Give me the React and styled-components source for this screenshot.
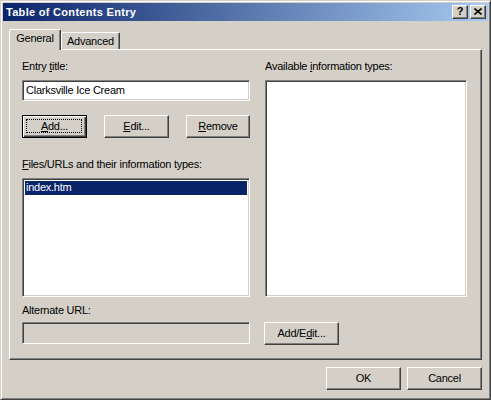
import styled, { createGlobalStyle } from 'styled-components'

/* ── GLOBAL ── */
const GlobalStyle = createGlobalStyle`
  html, body { margin: 0; padding: 0; background: #d4d0c8; }
  * { box-sizing: border-box; }
`

const FACE = '#d4d0c8'
const FONT = `'Liberation Sans', Arial, sans-serif`

/* ── WINDOW FRAME ── */
const Window = styled.div`
  width: 491px;
  height: 400px;
  background: ${FACE};
  border: 1px solid;
  border-color: ${FACE} #404040 #404040 ${FACE};
  box-shadow: inset 1px 1px #fff, inset -1px -1px #808080;
  padding: 2px;
  display: flex;
  flex-direction: column;
  font-family: ${FONT};
  font-size: 11px;
  letter-spacing: -0.25px;
  color: #000;
`

const TitleBar = styled.div`
  height: 18px;
  display: flex;
  align-items: center;
  padding: 0 2px 0 3px;
  background: linear-gradient(to right, #0a246a, #a6caf0);
`

const TitleText = styled.span`
  flex: 1;
  color: #fff;
  font-weight: bold;
  font-size: 11px;
  letter-spacing: 0.3px;
  line-height: 13px;
`

const CaptionBtn = styled.div`
  width: 16px;
  height: 14px;
  margin-left: ${({ $gap }) => $gap || 0}px;
  background: ${FACE};
  border: 1px solid;
  border-color: #fff #404040 #404040 #fff;
  box-shadow: inset -1px -1px #808080;
  display: flex;
  align-items: center;
  justify-content: center;
  font-weight: bold;
  font-size: 11px;
  line-height: 11px;
  padding-bottom: 1px;
`

/* ── BODY / TABS ── */
const Body = styled.div`
  flex: 1;
  display: flex;
  flex-direction: column;
  padding: 8px 6px 0 6px;
`

const TabRow = styled.div`
  height: 20px;
  display: flex;
  align-items: flex-end;
`

const Tab = styled.div`
  position: relative;
  z-index: 1;
  width: ${({ $w }) => $w}px;
  height: ${({ $active }) => ($active ? 21 : 17)}px;
  margin-bottom: ${({ $active }) => ($active ? -1 : 0)}px;
  background: ${FACE};
  border: 1px solid;
  border-bottom: none;
  border-color: #fff #404040 transparent #fff;
  border-radius: 2px 2px 0 0;
  box-shadow: inset -1px 0 #808080;
  text-align: center;
  padding-top: 2px;
  line-height: 13px;
`

const Panel = styled.div`
  height: 311px;
  border: 1px solid;
  border-color: #fff #404040 #404040 #fff;
  box-shadow: inset -1px -1px #808080;
  padding: 10px 14px 0 12px;
  display: flex;
  gap: 15px;
`

const Column = styled.div`
  width: ${({ $w }) => $w}px;
  display: flex;
  flex-direction: column;
`

const Label = styled.div`
  line-height: 13px;
  margin-top: ${({ $mt }) => $mt || 0}px;
  white-space: nowrap;
`

const U = styled.span`
  text-decoration: underline;
`

/* ── FIELDS ── */
const Sunken = styled.div`
  border: 1px solid;
  border-color: #808080 #fff #fff #808080;
  box-shadow: inset 1px 1px #404040, inset -1px -1px ${FACE};
`

const TextField = styled(Sunken)`
  height: ${({ $h }) => $h || 21}px;
  margin-top: ${({ $mt }) => $mt || 0}px;
  background: ${({ $disabled }) => ($disabled ? FACE : '#fff')};
  padding: 3px 3px 0 3px;
  line-height: 13px;
  white-space: nowrap;
`

const ListBox = styled(Sunken)`
  height: ${({ $h }) => $h}px;
  margin-top: ${({ $mt }) => $mt || 0}px;
  background: #fff;
  padding: 2px;
`

const ListRow = styled.div`
  height: 14px;
  line-height: 13px;
  padding-left: 1px;
  background: ${({ $selected }) => ($selected ? '#0a246a' : 'transparent')};
  color: ${({ $selected }) => ($selected ? '#fff' : '#000')};
`

/* ── BUTTONS ── */
const Button = styled.div`
  position: relative;
  width: ${({ $w }) => $w || 75}px;
  height: 23px;
  margin-top: ${({ $mt }) => $mt || 0}px;
  margin-left: ${({ $ml }) => $ml || 0}px;
  background: ${FACE};
  border: 1px solid;
  border-color: ${({ $default }) =>
    $default ? '#000' : '#fff #404040 #404040 #fff'};
  box-shadow: ${({ $default }) =>
    $default
      ? 'inset 1px 1px #fff, inset -1px -1px #404040, inset -2px -2px #808080'
      : 'inset -1px -1px #808080'};
  display: flex;
  align-items: center;
  justify-content: center;
  line-height: 13px;
  padding-bottom: 1px;

  ${({ $default }) =>
    $default &&
    `&::after {
      content: '';
      position: absolute;
      inset: 3px 4px 4px 3px;
      border: 1px dotted #000;
    }`}
`

const ButtonRow = styled.div`
  display: flex;
  justify-content: space-between;
  margin-top: ${({ $mt }) => $mt || 0}px;
`

const Footer = styled.div`
  margin-top: 7px;
  display: flex;
  justify-content: flex-end;
  gap: 6px;
`

export default function App() {
  return (
    <>
      <GlobalStyle />
      <Window>
        <TitleBar>
          <TitleText>Table of Contents Entry</TitleText>
          <CaptionBtn>?</CaptionBtn>
          <CaptionBtn $gap={2}>
            <svg width="8" height="7" viewBox="0 0 8 7">
              <path d="M0.5 0.5 L7.5 6.5 M7.5 0.5 L0.5 6.5" stroke="#000" strokeWidth="1.6" />
            </svg>
          </CaptionBtn>
        </TitleBar>

        <Body>
          <TabRow>
            <Tab $active $w={52}>General</Tab>
            <Tab $w={59}>Advanced</Tab>
          </TabRow>

          <Panel>
            <Column $w={228}>
              <Label>Entry <U>t</U>itle:</Label>
              <TextField $mt={7}>Clarksville Ice Cream</TextField>
              <ButtonRow $mt={14}>
                <Button $w={65} $default><span><U>A</U>dd...</span></Button>
                <Button $w={65}><span><U>E</U>dit...</span></Button>
                <Button $w={64}><span><U>R</U>emove</span></Button>
              </ButtonRow>
              <Label $mt={20}><U>F</U>iles/URLs and their information types:</Label>
              <ListBox $mt={7} $h={119}>
                <ListRow $selected>index.htm</ListRow>
              </ListBox>
              <Label $mt={7}>Alternate URL:</Label>
              <TextField $mt={5} $h={22} $disabled />
            </Column>

            <Column $w={202}>
              <Label>Available <U>i</U>nformation types:</Label>
              <ListBox $mt={7} $h={217} />
              <Button $w={75} $mt={25} $ml={-1}>
                <span>Add/E<U>d</U>it...</span>
              </Button>
            </Column>
          </Panel>

          <Footer>
            <Button>OK</Button>
            <Button>Cancel</Button>
          </Footer>
        </Body>
      </Window>
    </>
  )
}
